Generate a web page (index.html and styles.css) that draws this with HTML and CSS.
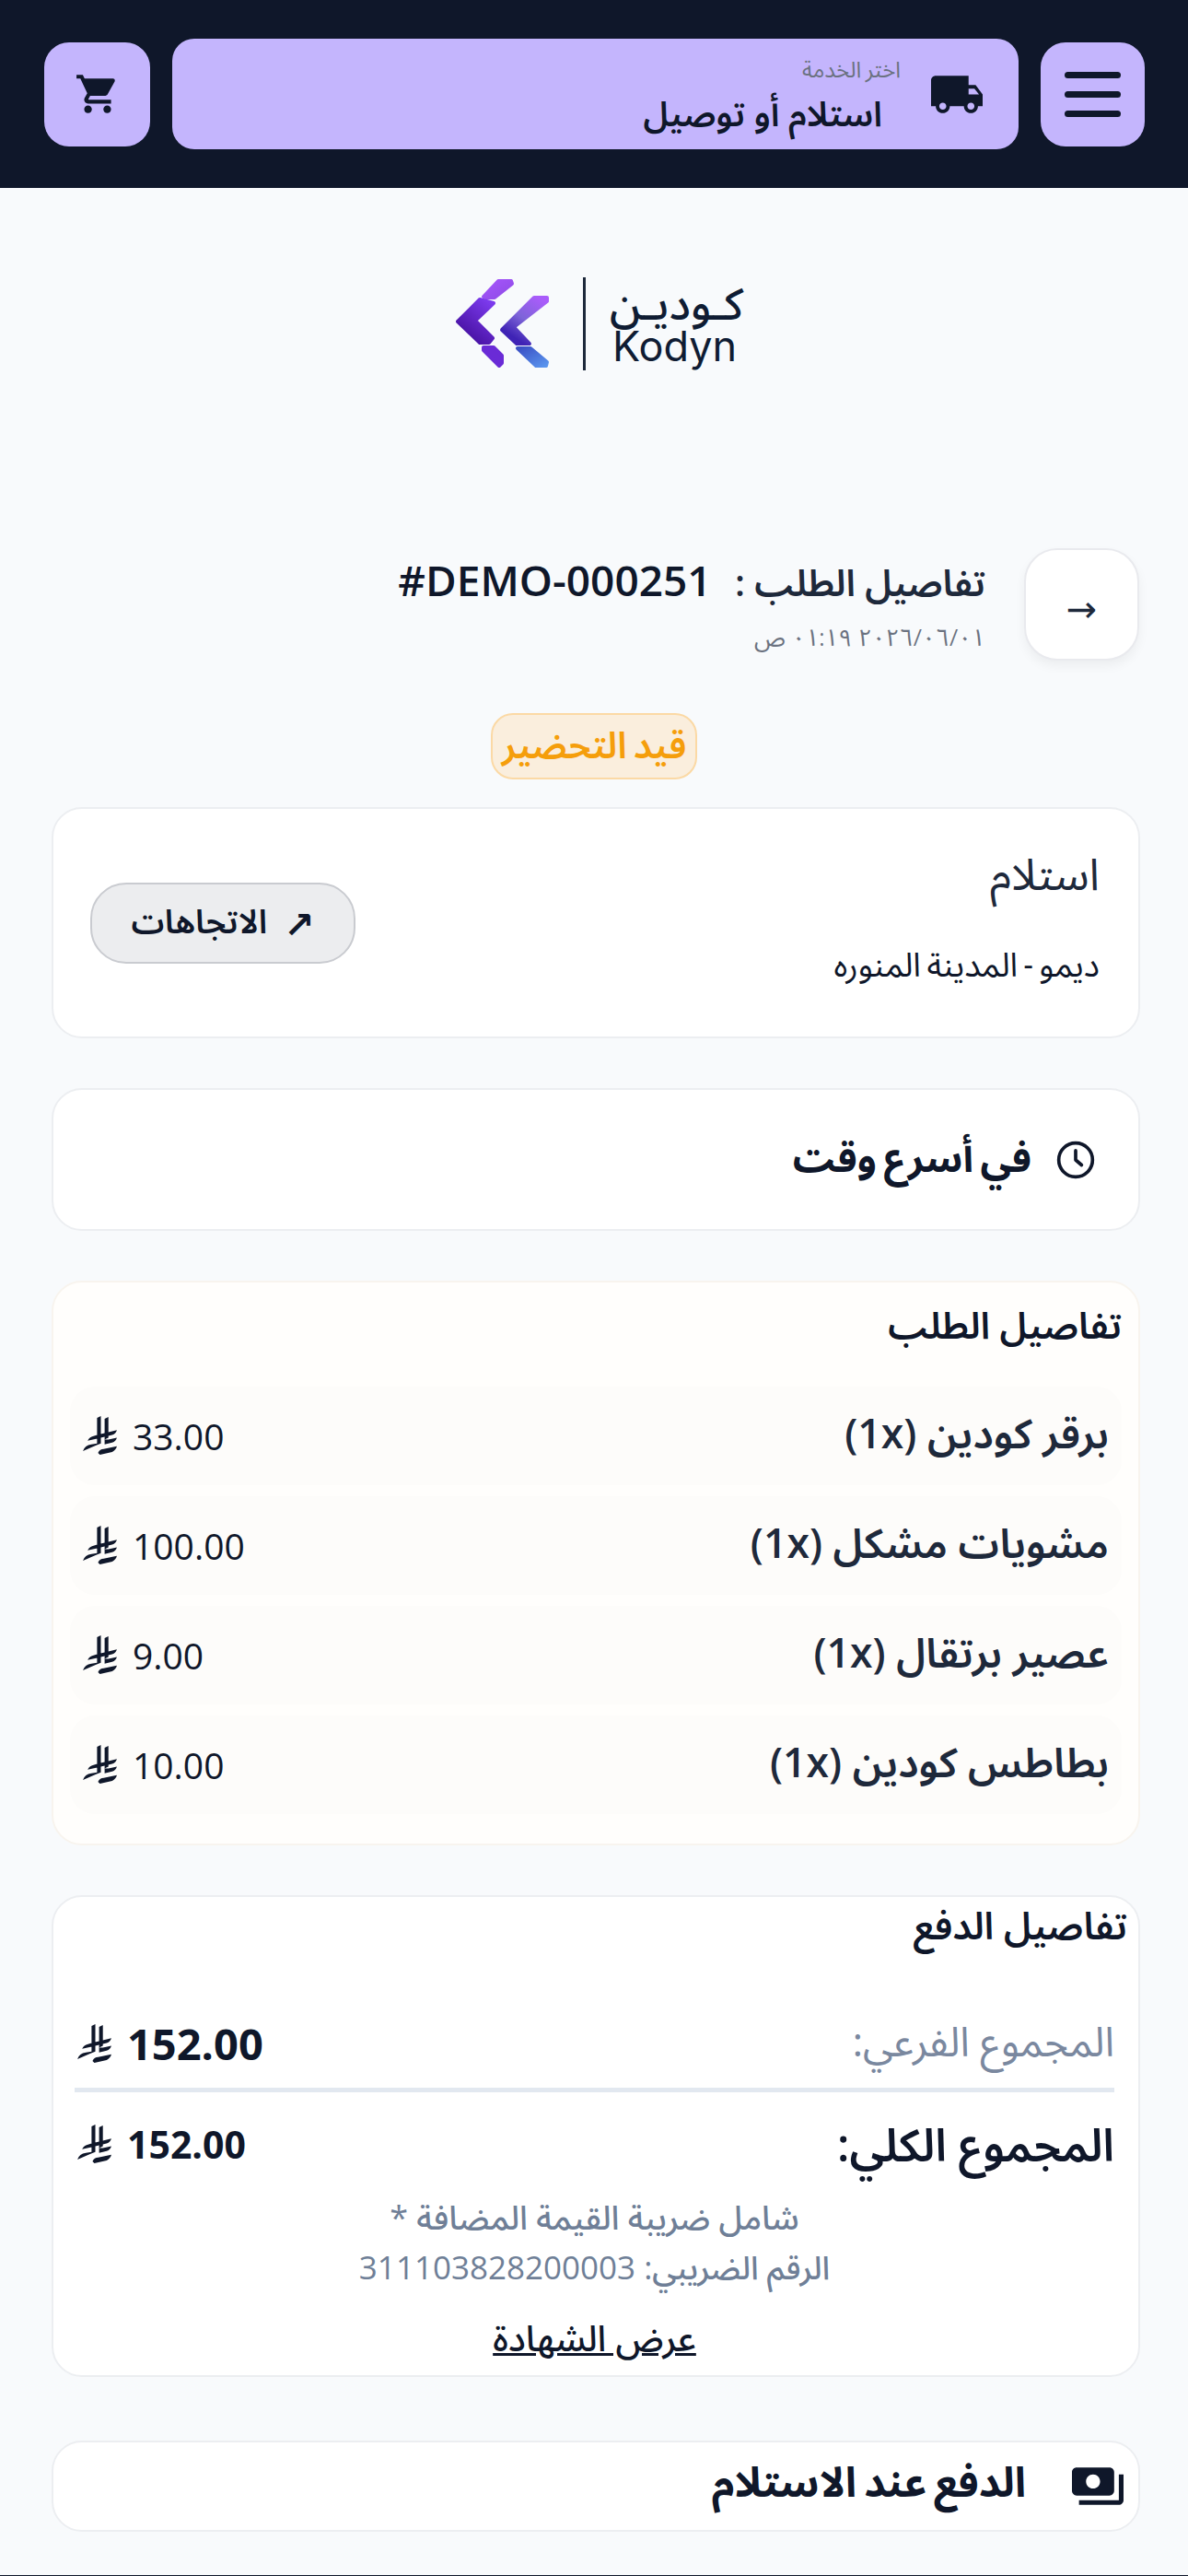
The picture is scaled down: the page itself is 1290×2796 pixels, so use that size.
FILE: index.html
```html
<!DOCTYPE html>
<html lang="ar" dir="rtl">
<head>
<meta charset="utf-8">
<title>تفاصيل الطلب</title>
<link rel="stylesheet" href="styles.css">
</head>
<body>
<header class="topbar">
  <button class="icon-btn menu-btn" aria-label="menu"><span></span><span></span><span></span></button>
  <button class="service-btn">
    <svg class="truck" viewBox="1 4 22 16"><path d="M20 8h-3V4H3c-1.1 0-2 .9-2 2v11h2c0 1.66 1.34 3 3 3s3-1.34 3-3h6c0 1.66 1.34 3 3 3s3-1.34 3-3h2v-5l-3-4zM6 18.5c-.83 0-1.5-.67-1.5-1.5s.67-1.5 1.5-1.5 1.5.67 1.5 1.5-.67 1.5-1.5 1.5zm13.5-9l1.96 2.5H17V9.5h2.5zm-1.5 9c-.83 0-1.5-.67-1.5-1.5s.67-1.5 1.5-1.5 1.5.67 1.5 1.5-.67 1.5-1.5 1.5z"/></svg>
    <span class="service-text">
      <span class="service-label">اختر الخدمة</span>
      <span class="service-value">استلام أو توصيل</span>
    </span>
  </button>
  <button class="icon-btn cart-btn" aria-label="cart">
    <svg class="cart" viewBox="0 0 24 24"><path d="M7 18c-1.1 0-1.99.9-1.99 2S5.9 22 7 22s2-.9 2-2-.9-2-2-2zM1 2v2h2l3.6 7.59-1.35 2.45c-.16.28-.25.61-.25.96 0 1.1.9 2 2 2h12v-2H7.42c-.14 0-.25-.11-.25-.25l.03-.12.9-1.63h7.45c.75 0 1.41-.41 1.75-1.03l3.58-6.49c.08-.14.12-.31.12-.48 0-.55-.45-1-1-1H5.21l-.94-2H1zm16 16c-1.1 0-1.99.9-1.99 2s.89 2 1.99 2 2-.9 2-2-.9-2-2-2z"/></svg>
  </button>
</header>

<main class="page">
  <div class="logo" dir="ltr">
    <svg class="logo-mark" viewBox="0 0 102 98">
      <defs>
        <linearGradient id="g1" x1="0.2" y1="0.9" x2="0.8" y2="0"><stop offset="0" stop-color="#45109f"/><stop offset="1" stop-color="#7c3aed"/></linearGradient>
        <linearGradient id="g2" x1="0.25" y1="0.85" x2="0.8" y2="0"><stop offset="0" stop-color="#3f23b5"/><stop offset="0.45" stop-color="#7d64d8"/><stop offset="1" stop-color="#a95cfa"/></linearGradient>
        <linearGradient id="g3" x1="0" y1="0" x2="1" y2="1"><stop offset="0" stop-color="#3a4fc4"/><stop offset="1" stop-color="#5a95ee"/></linearGradient>
        <linearGradient id="g4" x1="0" y1="0" x2="1" y2="1"><stop offset="0" stop-color="#a655fb"/><stop offset="1" stop-color="#8e4be6"/></linearGradient>
      </defs>
      <path class="logo-shape" d="M30 20 L46 3 L60 3 L61 6 L42 21 L33 21Z" fill="url(#g4)" stroke="url(#g4)"/>
      <path class="logo-shape" d="M26 23 L41 27 L21 46 L40 65 L36 70 L26 70 L2 47Z" fill="url(#g1)" stroke="url(#g1)"/>
      <path class="logo-shape" d="M30 75 L41 75 L50 84 L50 92 L47 95 L30 78Z" fill="#6a2bd6" stroke="#6a2bd6"/>
      <path class="logo-shape" d="M85 21 L99 21 L99 25 L63 53 L80 71 L66 71 L50 56Z" fill="url(#g2)" stroke="url(#g2)"/>
      <path class="logo-shape" d="M67 76 L81 76 L99 91 L98 95 L87 95Z" fill="url(#g3)" stroke="url(#g3)"/>
    </svg>
    <span class="logo-rule"></span>
    <span class="logo-words">
      <span class="logo-ar" dir="rtl">كـوديـن</span>
      <span class="logo-en">Kodyn</span>
    </span>
  </div>

  <section class="order-head">
    <button class="back-btn">→</button>
    <div class="order-titles">
      <h1 class="order-title"><span class="order-title-label">تفاصيل الطلب :</span> <bdi class="order-no">#DEMO-000251</bdi></h1>
      <p class="order-date">٢٠٢٦/٠٦/٠١ ٠١:١٩ ص</p>
    </div>
  </section>

  <div class="status-wrap"><span class="status">قيد التحضير</span></div>

  <section class="card pickup">
    <div>
      <h2 class="pickup-title">استلام</h2>
      <p class="pickup-place">ديمو - المدينة المنوره</p>
    </div>
    <button class="dir-btn"><span class="dir-arrow">↗</span> <span class="dir-text">الاتجاهات</span></button>
  </section>

  <section class="card time">
    <svg class="clock" viewBox="0 0 24 24"><circle cx="12" cy="12" r="10"/><path d="M12 6.5V12l3.5 3"/></svg>
    <span>في أسرع وقت</span>
  </section>

  <section class="card items">
    <h2 class="section-title">تفاصيل الطلب</h2>
    <div class="item-list">
      <div class="item"><span class="item-name">برقر كودين (1x)</span><span class="item-price"><span>33.00</span><svg class="sar" viewBox="0 0 37 41"><use href="#sar"/></svg></span></div>
      <div class="item"><span class="item-name">مشويات مشكل (1x)</span><span class="item-price"><span>100.00</span><svg class="sar" viewBox="0 0 37 41"><use href="#sar"/></svg></span></div>
      <div class="item"><span class="item-name">عصير برتقال (1x)</span><span class="item-price"><span>9.00</span><svg class="sar" viewBox="0 0 37 41"><use href="#sar"/></svg></span></div>
      <div class="item"><span class="item-name">بطاطس كودين (1x)</span><span class="item-price"><span>10.00</span><svg class="sar" viewBox="0 0 37 41"><use href="#sar"/></svg></span></div>
    </div>
  </section>

  <section class="card pay">
    <h2 class="pay-title">تفاصيل الدفع</h2>
    <div class="pay-row subtotal"><span class="sub-label">المجموع الفرعي:</span><span class="sub-val"><span>152.00</span><svg class="sar" viewBox="0 0 37 41"><use href="#sar"/></svg></span></div>
    <div class="pay-row total"><span class="total-label">المجموع الكلي:</span><span class="total-val"><span>152.00</span><svg class="sar" viewBox="0 0 37 41"><use href="#sar"/></svg></span></div>
    <p class="vat">شامل ضريبة القيمة المضافة *</p>
    <p class="vat tax-no">الرقم الضريبي: 311103828200003</p>
    <a class="cert" href="#">عرض الشهادة</a>
  </section>

  <section class="card method">
    <svg class="cash" viewBox="1 4 22 16"><path d="M19 14V6c0-1.1-.9-2-2-2H3c-1.1 0-2 .9-2 2v8c0 1.1.9 2 2 2h14c1.1 0 2-.9 2-2zm-9-1c-1.66 0-3-1.34-3-3s1.34-3 3-3 3 1.34 3 3-1.34 3-3 3zm13-6v11c0 1.1-.9 2-2 2H4v-2h17V7h2z"/></svg>
    <span class="method-text">الدفع عند الاستلام</span>
  </section>
</main>
<div class="bottom-line"></div>

<svg class="sprite" width="0" height="0" aria-hidden="true">
  <symbol id="sar" viewBox="0 0 37 41">
    <path fill="#0f172a" d="M15 2 L19 0 L19 24 L15 26Z M23 3 L27 1 L27 23 L23 25Z M0 37 Q2 31 9 30 L15 29 L15 24 L5 26 Q7 22 12 21 L15 20 L19 19 L36 15 Q35 19 31 20 L19 23 L19 29 L14 31 L5 35Z M27 25 L36 23 Q35 27 31 28 L23 30 L23 25Z M16 39 Q18 35 22 35 L36 32 Q35 36 31 38 L18 41Z"/>
  </symbol>
</svg>
</body>
</html>
```
FILE: styles.css
```css
* { box-sizing: border-box; }
html, body { margin: 0; padding: 0; }
body {
  width: 1290px;
  height: 2796px;
  overflow: hidden;
  position: relative;
  background: #f8fafc;
  color: #0f172a;
  font-family: "Open Sans", "Noto Sans Arabic", "Noto Sans", "DejaVu Sans", sans-serif;
}
button { font-family: inherit; font-stretch: inherit; color: inherit; border: 0; padding: 0; }
h1, h2, p { margin: 0; font-weight: inherit; }

.topbar {
  height: 204px;
  background: #0f172a;
  display: flex;
  align-items: center;
  padding: 0 47px 0 48px;
  gap: 24px;
}
.icon-btn {
  width: 113px;
  height: 113px;
  border-radius: 27px;
  background: #c4b5fd;
  flex: none;
  display: flex;
  align-items: center;
  justify-content: center;
}
.cart-btn { width: 115px; }
.menu-btn { flex-direction: column; gap: 14px; }
.menu-btn span { display: block; width: 61px; height: 7px; border-radius: 4px; background: #0f172a; }
.service-btn {
  flex: 1;
  height: 120px;
  border-radius: 24px;
  background: #c4b5fd;
  display: flex;
  align-items: center;
  gap: 33px;
  padding: 0 39px;
  text-align: right;
}
.truck { width: 56px; height: 41px; fill: #0f172a; flex: none; }
.service-text { display: flex; flex-direction: column; padding-top: 5px; }
.service-label { font-size: 24px; line-height: 36px; color: #6b7280; font-stretch: 87%; }
.service-value { font-size: 37.5px; line-height: 60px; font-weight: 600; margin-right: 20px; font-stretch: 92%; }
.cart { width: 50px; height: 50px; fill: #0f172a; }

.page { padding: 0 52px; }
.logo {
  height: 100px;
  margin-top: 97px;
  padding-left: 443px;
  display: flex;
  align-items: center;
}
.logo-mark { width: 102px; height: 98px; }
.logo-shape { stroke-width: 4; stroke-linejoin: round; }
.logo-rule { width: 3px; height: 101px; background: #1e293b; margin: 0 29px 0 36px; }
.logo-words { display: flex; flex-direction: column; align-items: flex-start; width: 142px; }
.logo-ar { font-size: 48px; line-height: 50px; color: #0f1c33; width: 100%; font-weight: 500; }
.logo-en { font-family: "Inter", sans-serif; font-size: 45px; line-height: 44px; color: #0f1c33; font-weight: 400; }

.order-head {
  display: flex;
  align-items: flex-start;
  gap: 42px;
  margin-top: 194px;
  padding-right: 1px;
}
.back-btn {
  width: 125px;
  height: 122px;
  border-radius: 36px;
  background: #fff;
  border: 2px solid #e9eaee;
  box-shadow: 0 6px 12px rgba(0,0,0,.05);
  font-size: 40px;
  padding-top: 6px;
  color: #1e293b;
  flex: none;
}
.order-title { font-size: 40px; line-height: 60px; font-weight: 600; color: #1e293b; margin-top: 4px; }
.order-title-label { font-stretch: 90%; }
.order-no { color: #0f172a; margin-right: 15px; font-size: 46px; }
.order-date { font-size: 26px; line-height: 42px; color: #6b7280; margin-top: 8px; font-stretch: 75%; word-spacing: 2px; }

.status-wrap { display: flex; justify-content: center; margin-top: 57px; }
.status {
  height: 72px;
  width: 224px;
  display: flex;
  align-items: center;
  justify-content: center;
  border-radius: 24px;
  background: #faeedd;
  border: 2px solid #fbd9a5;
  color: #f59e0b;
  font-size: 40px;
  font-weight: 600;
  font-stretch: 85%;
}

.card {
  width: 1182px;
  background: #fff;
  border: 2px solid #eceef1;
  border-radius: 33px;
}
.pickup {
  height: 251px;
  margin-top: 30px;
  display: flex;
  justify-content: space-between;
  align-items: flex-start;
  padding: 34px 42px 0 40px;
}
.pickup-title { font-size: 48px; line-height: 72px; color: #1e293b; font-stretch: 72%; }
.pickup-place { font-size: 36px; line-height: 54px; margin-top: 36px; font-stretch: 85%; }
.dir-btn {
  width: 288px;
  height: 88px;
  margin-top: 46px;
  border-radius: 39px;
  background: #ecedef;
  border: 2px solid #c9cbd0;
  font-size: 36px;
  font-weight: 600;
  display: flex;
  align-items: center;
  justify-content: center;
  gap: 18px;
}
.dir-text { font-stretch: 85%; }
.dir-arrow { font-size: 40px; }
.time {
  height: 155px;
  margin-top: 54px;
  display: flex;
  align-items: center;
  gap: 26px;
  padding: 0 46px;
  font-size: 42.5px;
  font-weight: 700;
  font-stretch: 87%;
}
.clock { width: 44px; height: 44px; fill: none; stroke: #0f172a; stroke-width: 2; stroke-linecap: round; stroke-linejoin: round; }

.items {
  height: 613px;
  margin-top: 54px;
  background: #fffefc;
  border-color: #f8f4ee;
  padding: 0 18px;
}
.section-title { font-size: 40.5px; line-height: 58px; font-weight: 600; margin: 17px 0 38px; font-stretch: 92%; }
.item-list { display: flex; flex-direction: column; gap: 12.5px; }
.item {
  height: 106.5px;
  border-radius: 27px;
  background: #fdfcfa;
  display: flex;
  align-items: center;
  justify-content: space-between;
  padding: 0 14px;
}
.item-name { font-size: 44.5px; font-weight: 600; color: #1e293b; font-stretch: 92%; }
.item-price { display: flex; align-items: center; gap: 16px; font-size: 39px; }
.sar { width: 38px; height: 42px; flex: none; }

.pay { height: 523px; margin-top: 54px; padding: 0 26px 0 23px; }
.pay-title { font-size: 41px; line-height: 58px; font-weight: 600; margin: 1px -14px 0 0; font-stretch: 92%; }
.pay-row { display: flex; justify-content: space-between; align-items: center; }
.subtotal { height: 102px; margin-top: 51px; border-bottom: 5px solid #e2e8f0; }
.sub-label { font-size: 44.5px; color: #7a889f; font-stretch: 92%; }
.sub-val { display: flex; align-items: center; gap: 16px; font-size: 47px; font-weight: 700; margin-left: 3px; }
.total { height: 109px; padding-top: 8px; align-items: flex-start; }
.total-label { font-size: 49px; font-weight: 600; font-stretch: 92%; }
.total-val { display: flex; align-items: center; gap: 16px; font-size: 41px; font-weight: 700; margin-left: 3px; margin-top: 20px; }
.vat { text-align: center; font-size: 36px; line-height: 54px; color: #6f7f97; font-weight: 500; font-stretch: 92%; }
.tax-no { font-size: 35px; }
.cert { display: block; text-align: center; font-size: 39px; line-height: 54px; color: #0f172a; margin-top: 22px; font-weight: 500; font-stretch: 92%; }

.method {
  height: 99px;
  margin-top: 69px;
  display: flex;
  align-items: center;
  gap: 50px;
  padding: 0 16px;
  font-size: 45px;
  font-weight: 700;
}
.method-text { font-stretch: 75%; margin-top: -6px; }
.cash { width: 56px; height: 41px; fill: #0f172a; flex: none; }

.bottom-line { position: absolute; left: 0; right: 0; bottom: 0; height: 1px; background: #0f172a; }
.sprite { position: absolute; }
```
